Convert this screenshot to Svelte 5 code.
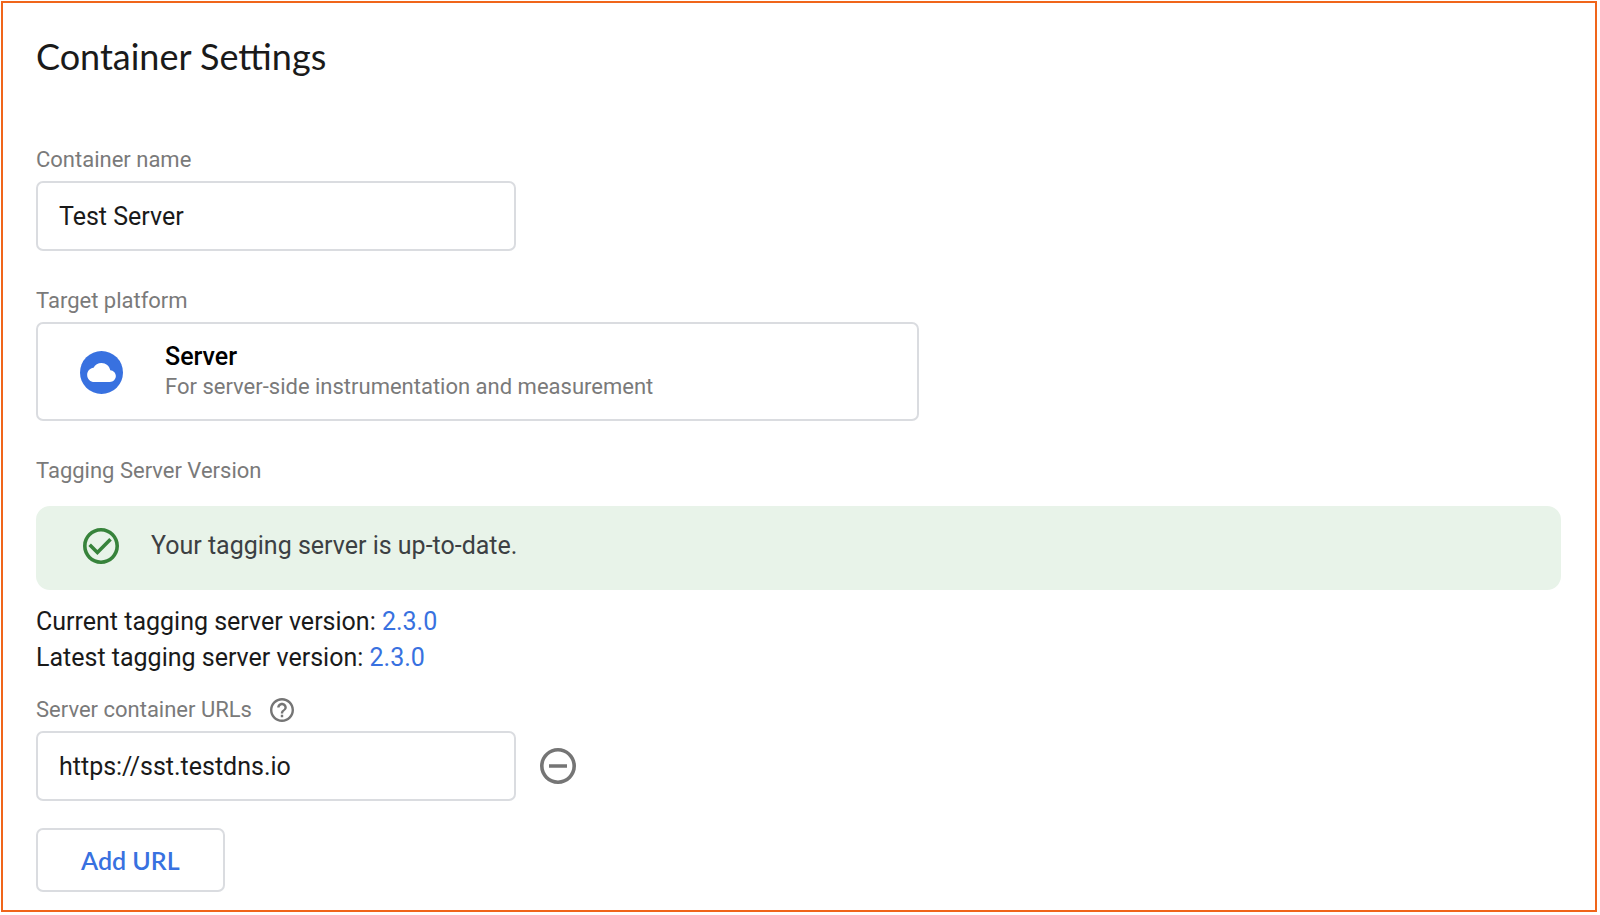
<script>
  let name = $state('Test Server');
  let urls = $state(['https://sst.testdns.io']);

  const versions = [
    { label: 'Current tagging server version:', value: '2.3.0' },
    { label: 'Latest tagging server version:', value: '2.3.0' }
  ];

  const addUrl = () => {
    urls.push('');
  };

  const removeUrl = (index) => {
    urls.splice(index, 1);
  };
</script>

<main>
  <h1>Container Settings</h1>

  <form onsubmit={(e) => e.preventDefault()}>
    <section>
      <label class="label" for="container-name">Container name</label>
      <input id="container-name" type="text" bind:value={name} />
    </section>

    <section>
      <h2 class="label">Target platform</h2>
      <div class="platform">
        <svg class="platform-icon" viewBox="0 0 42 42" aria-hidden="true">
          <circle cx="21" cy="21" r="21" fill="#3871e0" />
          <path
            transform="translate(7 7) scale(1.167)"
            fill="#fff"
            d="M19.35 10.04C18.67 6.59 15.64 4 12 4 9.11 4 6.6 5.64 5.35 8.04 2.34 8.36 0 10.91 0 14c0 3.31 2.69 6 6 6h13c2.76 0 5-2.24 5-5 0-2.64-2.05-4.78-4.65-4.96z"
          />
        </svg>
        <div>
          <strong>Server</strong>
          <p class="description">For server-side instrumentation and measurement</p>
        </div>
      </div>
    </section>

    <section class="version">
      <h2 class="label">Tagging Server Version</h2>
      <div class="status" role="status">
        <svg class="icon" viewBox="2 2 20 20" aria-hidden="true">
          <path
            fill="#37833b"
            d="M16.59 7.58L10 14.17l-3.59-3.58L5 12l5 5 8-8zM12 2C6.48 2 2 6.48 2 12s4.48 10 10 10 10-4.48 10-10S17.52 2 12 2zm0 18c-4.42 0-8-3.58-8-8s3.58-8 8-8 8 3.58 8 8-3.58 8-8 8z"
          />
        </svg>
        <span>Your tagging server is up-to-date.</span>
      </div>
      {#each versions as version}
        <p>{version.label} <a href="#release-notes">{version.value}</a></p>
      {/each}
    </section>

    <section class="urls">
      <div class="label-row">
        <label class="label" for="url-0">Server container URLs</label>
        <button class="icon-button" type="button" aria-label="Help">
          <svg class="help" viewBox="2 2 20 20" aria-hidden="true">
            <path
              fill="#757575"
              d="M11 18h2v-2h-2v2zm1-16C6.48 2 2 6.48 2 12s4.48 10 10 10 10-4.48 10-10S17.52 2 12 2zm0 18c-4.41 0-8-3.59-8-8s3.59-8 8-8 8 3.59 8 8-3.59 8-8 8zm0-14c-2.21 0-4 1.79-4 4h2c0-1.1.9-2 2-2s2 .9 2 2c0 2-3 1.75-3 5h2c0-2.25 3-2.5 3-5 0-2.21-1.79-4-4-4z"
            />
          </svg>
        </button>
      </div>
      {#each urls as _, i}
        <div class="url-row">
          <input id="url-{i}" type="text" aria-label="Server container URL" bind:value={urls[i]} />
          <button class="icon-button" type="button" aria-label="Remove URL" onclick={() => removeUrl(i)}>
            <svg class="icon" viewBox="2 2 20 20" aria-hidden="true">
              <path
                fill="#757575"
                d="M7 11v2h10v-2H7zm5-9C6.48 2 2 6.48 2 12s4.48 10 10 10 10-4.48 10-10S17.52 2 12 2zm0 18c-4.41 0-8-3.59-8-8s3.59-8 8-8 8 3.59 8 8-3.59 8-8 8z"
              />
            </svg>
          </button>
        </div>
      {/each}
      <button class="add" type="button" onclick={addUrl}>Add URL</button>
    </section>
  </form>
</main>

<style>
  :global(body) {
    background: #fff;
  }

  main {
    margin: 1px 3px 3px 1px;
    padding: 31px 34px 18px 33px;
    border: 2px solid #f0651a;
    font-family: Roboto, 'Liberation Sans', sans-serif;
    font-size: 25px;
    line-height: 36px;
    color: #1a1a1a;
  }

  h1 {
    margin: 0 0 65px;
    font-family: 'Google Sans', Lato, sans-serif;
    font-size: 36px;
    font-weight: 400;
    line-height: 44px;
  }

  p {
    margin: 0;
  }

  section {
    margin-bottom: 33px;
  }

  .label {
    display: block;
    margin: 0 0 4px;
    font-size: 22px;
    font-weight: 400;
    line-height: 34px;
    color: #7a7a7a;
  }

  input {
    display: block;
    box-sizing: border-box;
    width: 480px;
    max-width: 100%;
    height: 70px;
    padding: 0 21px;
    border: 2px solid #dadce0;
    border-radius: 7px;
    background: #fff;
    font: inherit;
    color: #1a1a1a;
  }

  .platform {
    display: flex;
    align-items: center;
    box-sizing: border-box;
    max-width: 883px;
    gap: 42px;
    padding: 18px 42px 17px;
    border: 2px solid #dadce0;
    border-radius: 7px;
  }

  .platform-icon {
    flex: none;
    width: 43px;
    height: 43px;
  }

  strong {
    display: block;
    font-weight: 500;
    line-height: 30px;
    color: #000;
  }

  .description {
    font-size: 22px;
    line-height: 30px;
    color: #7a7a7a;
  }

  .version {
    margin-bottom: 17px;
  }

  .version .label {
    margin-bottom: 18px;
  }

  .status {
    display: flex;
    align-items: center;
    gap: 32px;
    margin-bottom: 14px;
    padding: 22px 47px 26px;
    border-radius: 14px;
    background: #e8f3e9;
    color: #3c4043;
  }

  .icon {
    display: block;
    flex: none;
    width: 36px;
    height: 36px;
  }

  a {
    color: #3871e0;
    text-decoration: none;
  }

  .urls {
    margin-bottom: 0;
  }

  .label-row,
  .url-row {
    display: flex;
    align-items: center;
  }

  .label-row {
    gap: 18px;
    margin-bottom: 4px;
  }

  .label-row .label {
    margin-bottom: 0;
  }

  .url-row {
    gap: 24px;
    margin-bottom: 27px;
  }

  .icon-button {
    padding: 0;
    border: 0;
    background: none;
    cursor: pointer;
  }

  .help {
    display: block;
    width: 24px;
    height: 24px;
  }

  .add {
    height: 64px;
    padding: 0 43px;
    border: 2px solid #dadce0;
    border-radius: 7px;
    background: #fff;
    font-family: 'Google Sans', Lato, sans-serif;
    font-size: 25px;
    font-weight: 600;
    color: #3871e0;
    cursor: pointer;
  }
</style>
